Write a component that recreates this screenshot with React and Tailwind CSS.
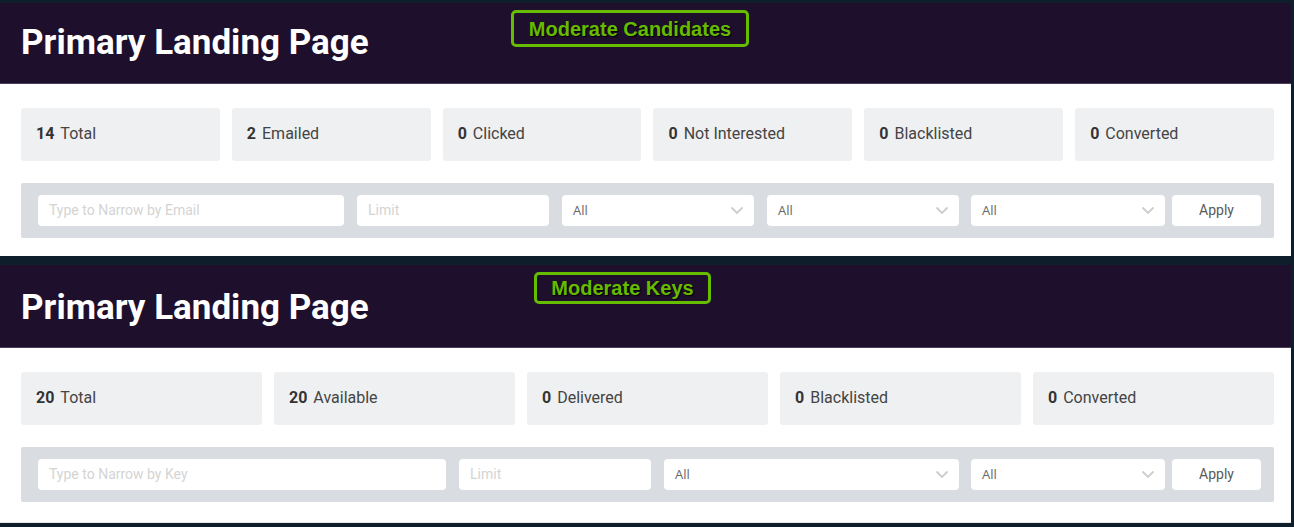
import React from "react";

const Chevron = () => (
  <svg className="w-[14px] h-[9px]" viewBox="0 0 14 9" fill="none" stroke="#cdcdcd" strokeWidth="1.8">
    <path d="M1.5 1.5l5.5 5.5 5.5-5.5" />
  </svg>
);

const TextBox = ({ placeholder, className }) => (
  <div className={`h-[31px] bg-white rounded-[4px] flex items-center px-[11px] text-[14px] text-[#d4d4d4] ${className}`}>
    {placeholder}
  </div>
);

const SelectBox = ({ className }) => (
  <div className={`h-[31px] bg-white rounded-[4px] flex items-center justify-between pl-[11px] pr-[10px] ${className}`}>
    <span className="text-[13px] text-[#666] font-['Open_Sans',sans-serif]">All</span>
    <Chevron />
  </div>
);

const Section = ({ title, badge, badgeClass, headerClass, stats, filters, bodyClass }) => {
  return (
    <div>
      {/* Header */}
      <div className={`relative bg-[#1e0f2c] border-b border-[#4d4059] pl-[21px] ${headerClass}`}>
        <h1 className="text-[35px] leading-[35px] font-bold text-white font-['Roboto',sans-serif]">{title}</h1>
        <div
          className={`absolute flex items-center justify-center border-[3px] border-[#66bd00] rounded-[5px] text-[20px] font-bold text-[#66bb00] font-['Liberation_Sans',Arial,sans-serif] [text-shadow:1px_1px_1px_#000] ${badgeClass}`}
        >
          {badge}
        </div>
      </div>

      {/* Body */}
      <div className={`bg-white pl-[21px] pr-[17px] pt-[24px] ${bodyClass}`}>
        <div className="flex gap-[12px]">
          {stats.map((s) => (
            <div key={s.label} className="flex-1 h-[53px] bg-[#eff0f2] rounded-[3px] flex items-center px-[15px] pb-[2px] text-[16px]">
              <span className="font-bold text-[#333] mr-[6px]">{s.value}</span>
              <span className="text-[#444]">{s.label}</span>
            </div>
          ))}
        </div>

        <div className="mt-[22px] h-[55px] bg-[#d9dce0] rounded-[2px] flex items-center pl-[17px]">
          {filters}
          <div className="ml-[7px] w-[89px] h-[31px] bg-white rounded-[4px] flex items-center justify-center text-[14px] text-[#5a5a5a]">
            Apply
          </div>
        </div>
      </div>
    </div>
  );
};

export default function App() {
  return (
    <div className="w-[1294px] h-[527px] bg-[#0e1e2a] pr-[3px] pt-[3px] font-['Roboto',sans-serif] overflow-hidden">
      <Section
        title="Primary Landing Page"
        badge="Moderate Candidates"
        badgeClass="left-[511px] top-[7px] w-[238px] h-[37px]"
        headerClass="h-[81px] pt-[22px]"
        bodyClass="h-[172px]"
        stats={[
          { value: "14", label: "Total" },
          { value: "2", label: "Emailed" },
          { value: "0", label: "Clicked" },
          { value: "0", label: "Not Interested" },
          { value: "0", label: "Blacklisted" },
          { value: "0", label: "Converted" },
        ]}
        filters={
          <>
            <TextBox placeholder="Type to Narrow by Email" className="w-[306px]" />
            <TextBox placeholder="Limit" className="w-[192px] ml-[13px]" />
            <SelectBox className="w-[192px] ml-[13px]" />
            <SelectBox className="w-[192px] ml-[13px]" />
            <SelectBox className="w-[194px] ml-[12px]" />
          </>
        }
      />

      <div className="h-[9px]" />

      <Section
        title="Primary Landing Page"
        badge="Moderate Keys"
        badgeClass="left-[534px] top-[7px] w-[177px] h-[32px]"
        headerClass="h-[83px] pt-[25px]"
        bodyClass="h-[175px] border-b border-[#e6e6e6]"
        stats={[
          { value: "20", label: "Total" },
          { value: "20", label: "Available" },
          { value: "0", label: "Delivered" },
          { value: "0", label: "Blacklisted" },
          { value: "0", label: "Converted" },
        ]}
        filters={
          <>
            <TextBox placeholder="Type to Narrow by Key" className="w-[408px]" />
            <TextBox placeholder="Limit" className="w-[192px] ml-[13px]" />
            <SelectBox className="w-[295px] ml-[13px]" />
            <SelectBox className="w-[194px] ml-[12px]" />
          </>
        }
      />
    </div>
  );
}
